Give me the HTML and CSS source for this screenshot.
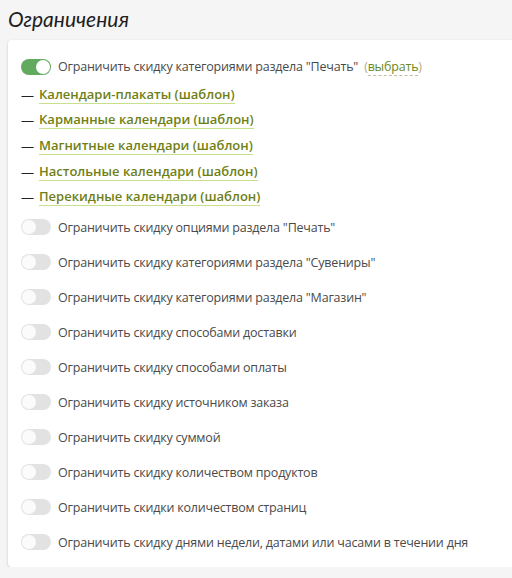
FILE: index.html
```html
<!DOCTYPE html>
<html lang="ru">
<head>
<meta charset="utf-8">
<title>Ограничения</title>
<link rel="stylesheet" href="styles.css">
</head>
<body>
<div class="page">
  <h2 class="title">Ограничения</h2>
  <div class="card">
    <div class="row">
      <span class="toggle on"></span>
      <span class="label">Ограничить скидку категориями раздела "Печать" <span class="paren">(<a class="pick">выбрать</a>)</span></span>
    </div>
    <div class="links">
      <div class="link-row"><span class="dash">—</span><a class="cat">Календари-плакаты (шаблон)</a></div>
      <div class="link-row"><span class="dash">—</span><a class="cat">Карманные календари (шаблон)</a></div>
      <div class="link-row"><span class="dash">—</span><a class="cat">Магнитные календари (шаблон)</a></div>
      <div class="link-row"><span class="dash">—</span><a class="cat">Настольные календари (шаблон)</a></div>
      <div class="link-row"><span class="dash">—</span><a class="cat">Перекидные календари (шаблон)</a></div>
    </div>
    <div class="row"><span class="toggle"></span><span class="label">Ограничить скидку опциями раздела "Печать"</span></div>
    <div class="row"><span class="toggle"></span><span class="label">Ограничить скидку категориями раздела "Сувениры"</span></div>
    <div class="row"><span class="toggle"></span><span class="label">Ограничить скидку категориями раздела "Магазин"</span></div>
    <div class="row"><span class="toggle"></span><span class="label">Ограничить скидку способами доставки</span></div>
    <div class="row"><span class="toggle"></span><span class="label">Ограничить скидку способами оплаты</span></div>
    <div class="row"><span class="toggle"></span><span class="label">Ограничить скидку источником заказа</span></div>
    <div class="row"><span class="toggle"></span><span class="label">Ограничить скидку суммой</span></div>
    <div class="row"><span class="toggle"></span><span class="label">Ограничить скидку количеством продуктов</span></div>
    <div class="row"><span class="toggle"></span><span class="label">Ограничить скидки количеством страниц</span></div>
    <div class="row"><span class="toggle"></span><span class="label">Ограничить скидку днями недели, датами или часами в течении дня</span></div>
  </div>
</div>
</body>
</html>
```
FILE: styles.css
```css
html, body {
  margin: 0;
  padding: 0;
  background: #f5f5f5;
  font-family: "Open Sans", "Noto Sans", sans-serif;
  overflow: hidden;
}
.page {
  padding: 0 0 0 8px;
}
.title {
  margin: 0;
  height: 40px;
  box-sizing: border-box;
  padding-top: 6px;
  font-family: "Lato", "Open Sans", sans-serif;
  font-size: 21px;
  font-style: italic;
  font-weight: 400;
  color: #1e1e1e;
  line-height: 26px;
}
.card {
  background: #fff;
  border-radius: 4px 0 0 4px;
  box-shadow: 0 1px 3px rgba(0,0,0,0.18);
  padding: 9px 0 7px 13px;
  font-size: 12.5px;
  letter-spacing: -0.2px;
  color: #4a4a4a;
}
.row {
  display: flex;
  align-items: center;
  height: 35px;
}
.toggle {
  position: relative;
  flex: none;
  width: 30px;
  height: 16px;
  border-radius: 8px;
  background: #e2e2e2;
  margin-right: 7px;
}
.toggle::after {
  content: "";
  position: absolute;
  top: 1px;
  left: 1px;
  width: 14px;
  height: 14px;
  border-radius: 50%;
  background: #fbfbfb;
}
.toggle.on {
  background: #62aa5f;
}
.toggle.on::after {
  left: 15px;
  background: #fff;
}
.label {
  white-space: nowrap;
}
.paren {
  color: #b9a78a;
  margin-left: 3px;
}
.pick {
  color: #6a8a1c;
  border-bottom: 1px dashed #c4b9a2;
}
.links {
  margin: -2px 0 0;
}
.link-row {
  display: flex;
  align-items: center;
  height: 25.6px;
  color: #222;
  font-size: 13px;
  letter-spacing: 0;
}
.dash {
  width: 18px;
  flex: none;
}
.cat {
  color: #6f7f16;
  font-weight: 600;
  border-bottom: 1px solid #c6e08c;
  line-height: 17px;
}
```
